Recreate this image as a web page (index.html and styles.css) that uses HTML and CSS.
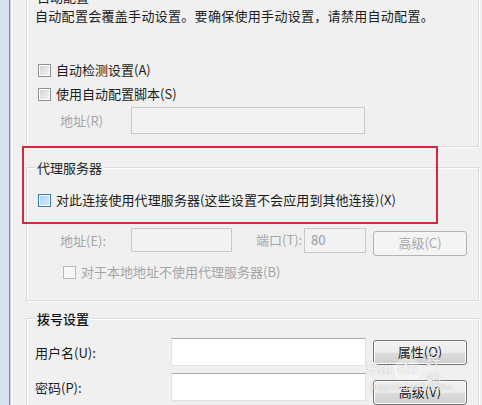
FILE: index.html
```html
<!DOCTYPE html>
<html lang="zh-CN">
<head>
<meta charset="utf-8">
<title>设置</title>
<link rel="stylesheet" href="styles.css">
</head>
<body>
<div class="win">
  <div class="edge"></div>
  <div class="main">
    <div class="group g1">
      <div class="glabel">自动配置</div>
      <div class="desc">自动配置会覆盖手动设置。要确保使用手动设置，请禁用自动配置。</div>
      <div class="cbrow r1"><span class="cb"></span><span>自动检测设置(A)</span></div>
      <div class="cbrow r2"><span class="cb"></span><span>使用自动配置脚本(S)</span></div>
      <div class="field r3">
        <span class="flabel dis">地址(R)</span>
        <span class="input disabled wide"></span>
      </div>
    </div>

    <div class="group g2">
      <div class="glabel">代理服务器</div>
      <div class="cbrow r4"><span class="cb blue"></span><span>对此连接使用代理服务器(这些设置不会应用到其他连接)(X)</span></div>
      <div class="field r5">
        <span class="flabel dis">地址(E):</span>
        <span class="input disabled addr"></span>
        <span class="plabel dis">端口(T):</span>
        <span class="input disabled port">80</span>
        <span class="btn disabledbtn">高级(C)</span>
      </div>
      <div class="cbrow r6 dis"><span class="cb off"></span><span>对于本地地址不使用代理服务器(B)</span></div>
    </div>

    <div class="group g3">
      <div class="glabel dark">拨号设置</div>
      <div class="field r7">
        <span class="flabel2">用户名(U):</span>
        <span class="input white user"></span>
        <span class="btn up">属性(O)</span>
      </div>
      <div class="field r8">
        <span class="flabel2">密码(P):</span>
        <span class="input white user"></span>
        <span class="btn down">高级(V)</span>
      </div>
    </div>
  </div>
  <div class="watermark">
    <div class="wm-row"><span class="wm-bai">Bai</span><span class="wm-du">du</span><span class="wm-jy">经验</span></div>
    <div class="wm-small">jingyan.baidu.com</div>
  </div>
  <div class="redbox"></div>
</div>
</body>
</html>
```
FILE: styles.css
```css
html, body {
  margin: 0;
  padding: 0;
  background: #f0f0f0;
}
body {
  font-family: "Noto Sans CJK SC", "Noto Sans", sans-serif;
  font-size: 13px;
  color: #1c1c1c;
  overflow: hidden;
}
.win {
  position: relative;
  display: flex;
  width: 482px;
  height: 405px;
  overflow: hidden;
}
.edge {
  width: 13px;
  flex: none;
  background: linear-gradient(to right, #d6e1ee 0, #d9e3ef 9px, #7d8fa3 9px, #7d8fa3 10px, #c8d3df 10px, #c8d3df 11px, #f8f9fb 11px, #f8f9fb 13px);
}
.main {
  flex: 1;
  padding: 0 3px 0 13px;
  display: flex;
  flex-direction: column;
}
.group {
  border: 1px solid #d6dce1;
  box-shadow: inset 1px 1px 0 #ffffff, 1px 1px 0 #ffffff;
  padding-left: 8px;
  flex: none;
}
.glabel {
  display: block;
  width: fit-content;
  height: 18px;
  line-height: 18px;
  margin-top: -9px;
  background: #f0f0f0;
  padding: 0 2px;
  color: #222;
}
.glabel.dark { color: #111; font-weight: 500; }
.g1 { margin-top: -4px; padding-bottom: 12px; }
.g2 { margin-top: 20px; padding-bottom: 19px; }
.g3 { margin-top: 17px; height: 120px; }
.desc {
  height: 18px;
  line-height: 18px;
  margin-top: 1px;
  letter-spacing: 0.3px;
}
.cbrow {
  display: flex;
  align-items: center;
  height: 18px;
  line-height: 18px;
  white-space: nowrap;
}
.cb {
  width: 11px;
  height: 11px;
  flex: none;
  border: 1px solid #8e8f8f;
  box-shadow: inset 0 0 0 1px #ffffff;
  background: linear-gradient(135deg, #cfd2d6, #f4f4f4);
  margin-left: 3px;
  margin-right: 5px;
}
.cb.blue {
  border-color: #3b79ad;
  background: linear-gradient(135deg, #a9d0f1, #d6ecfb);
}
.cb.off {
  border-color: #b9b9b9;
  background: #f7f7f7;
  box-shadow: none;
}
.r1 { margin-top: 36px; }
.r2 { margin-top: 6px; }
.field {
  display: flex;
  align-items: flex-start;
  white-space: nowrap;
}
.r3 { margin-top: 4px; height: 27px; }
.flabel {
  width: 71px;
  padding-left: 25px;
  line-height: 27px;
  flex: none;
}
.dis { color: #a5a5a5; }
.input {
  display: block;
  box-sizing: border-box;
  flex: none;
  border: 1px solid #c9cdd2;
  border-top-color: #a9acb1;
  padding-left: 6px;
  line-height: 22px;
}
.input.disabled {
  background: #f2f2f2;
  border-color: #cacaca;
  color: #9a9a9a;
}
.input.wide { width: 234px; height: 27px; }
.r4 { margin-top: 14px; letter-spacing: 0.1px; }
.r5 { margin-top: 19px; height: 28px; }
.r5 .flabel { line-height: 25px; }
.input.addr { width: 101px; height: 24px; }
.plabel {
  width: 48px;
  padding-left: 24px;
  line-height: 23px;
  flex: none;
}
.input.port { width: 62px; height: 25px; margin-left: 0; }
.btn {
  box-sizing: border-box;
  display: block;
  flex: none;
  width: 94px;
  height: 25px;
  line-height: 22px;
  text-align: center;
  border-radius: 3px;
  margin-left: 7px;
}
.disabledbtn {
  margin-top: 3px;
  border: 1px solid #b0b4b7;
  background: #f4f4f4;
  color: #a8a8a8;
}
.r6 { margin-top: 7px; padding-left: 25px; }
.r7 { margin-top: 10px; height: 27px; }
.r8 { margin-top: 8px; height: 28px; }
.flabel2 {
  width: 136px;
  line-height: 30px;
  flex: none;
  padding-left: 2px;
  margin-left: -2px;
}
.input.white {
  background: #ffffff;
  border-color: #e0e3e7;
  border-top-color: #a6a9ad;
}
.input.user { width: 195px; height: 28px; }
.btn.up, .btn.down {
  border: 1px solid #767676;
  background: linear-gradient(#f2f2f2 0, #ebebeb 50%, #dddddd 51%, #cfcfcf 100%);
  box-shadow: inset 0 0 0 1px #fbfbfb;
  color: #1e1e1e;
}
.btn.up { margin-top: 2px; height: 25px; }
.btn.down { margin-top: 7px; height: 25px; }
.redbox {
  position: absolute;
  left: 22px;
  top: 146px;
  width: 412px;
  height: 74px;
  border: 2px solid #d12a3f;
  pointer-events: none;
}
.watermark {
  position: absolute;
  left: 366px;
  top: 359px;
  width: 90px;
  display: flex;
  flex-direction: column;
  align-items: center;
  color: rgba(255, 255, 255, 0.85);
  text-shadow: 0 0 1px rgba(100, 100, 100, 0.5);
  pointer-events: none;
  font-family: "Liberation Sans", sans-serif;
}
.wm-row {
  display: flex;
  align-items: center;
  gap: 3px;
  height: 20px;
  line-height: 20px;
}
.wm-bai, .wm-du {
  font-size: 17px;
  font-weight: bold;
}
.wm-du {
  border-radius: 9px 9px 4px 4px;
  background: rgba(255, 255, 255, 0.35);
  padding: 0 2px;
}
.wm-jy {
  font-family: "Noto Sans CJK SC", sans-serif;
  font-size: 15px;
  margin-left: 3px;
}
.wm-small {
  font-size: 10px;
  line-height: 12px;
  margin-top: 2px;
}
```
